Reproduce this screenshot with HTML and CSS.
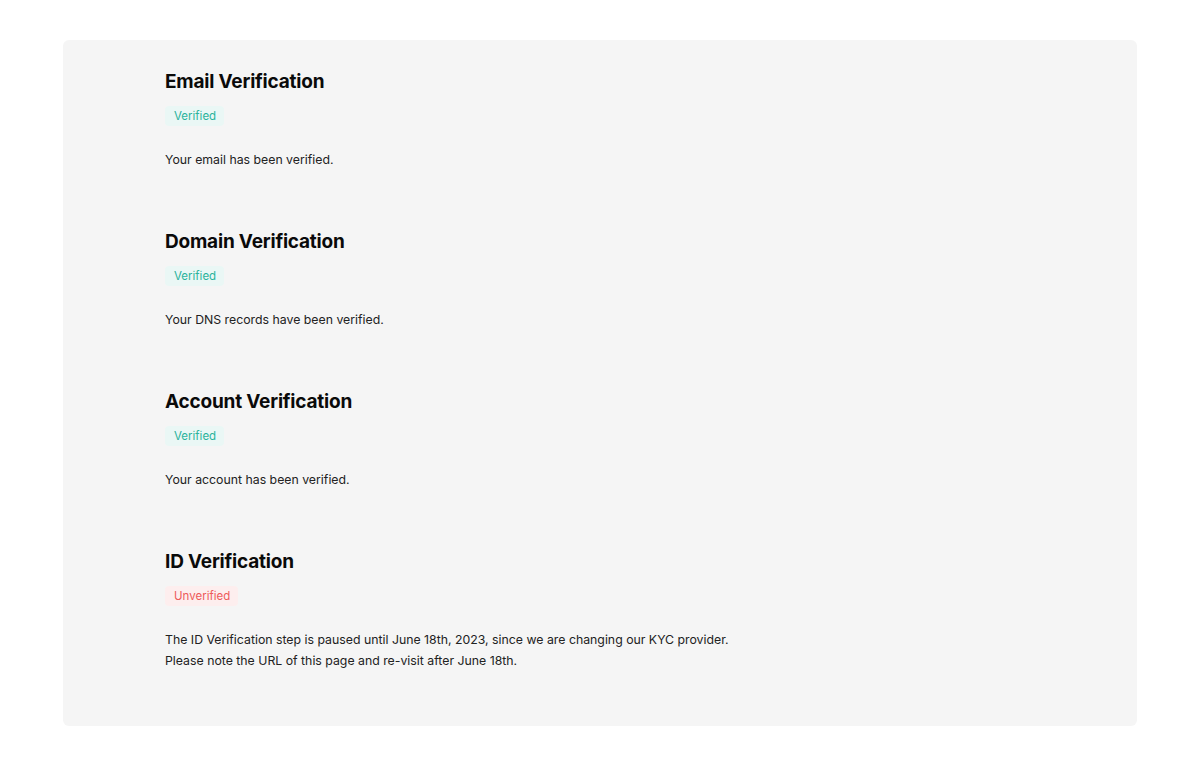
FILE: index.html
```html
<!DOCTYPE html>
<html lang="en">
<head>
<meta charset="utf-8">
<title>Verification</title>
<link rel="stylesheet" href="styles.css">
</head>
<body>
<main class="panel">
  <section class="step">
    <h2 class="step-title">Email Verification</h2>
    <span class="badge badge-ok">Verified</span>
    <p class="step-desc">Your email has been verified.</p>
  </section>
  <section class="step">
    <h2 class="step-title">Domain Verification</h2>
    <span class="badge badge-ok">Verified</span>
    <p class="step-desc">Your DNS records have been verified.</p>
  </section>
  <section class="step">
    <h2 class="step-title">Account Verification</h2>
    <span class="badge badge-ok">Verified</span>
    <p class="step-desc">Your account has been verified.</p>
  </section>
  <section class="step">
    <h2 class="step-title">ID Verification</h2>
    <span class="badge badge-bad">Unverified</span>
    <p class="step-desc">The ID Verification step is paused until June 18th, 2023, since we are changing our KYC provider.<br>Please note the URL of this page and re-visit after June 18th.</p>
  </section>
</main>
</body>
</html>
```
FILE: styles.css
```css
* { box-sizing: border-box; }
html, body { margin: 0; padding: 0; background: #ffffff; }
body {
  font-family: Inter, "Noto Sans", sans-serif;
  color: #1f1f1f;
  padding: 40px 63px 0 63px;
}
.panel {
  background: #f5f5f5;
  border-radius: 6px;
  padding: 28px 102px 55px 102px;
  display: flex;
  flex-direction: column;
  gap: 58px;
}
.step {
  display: flex;
  flex-direction: column;
  align-items: flex-start;
}
.step-title {
  margin: 0;
  font-size: 19px;
  line-height: 28px;
  font-weight: 700;
  color: #0a0a0a;
  letter-spacing: -0.2px;
}
.badge {
  margin-top: 10px;
  display: inline-block;
  font-size: 11.5px;
  line-height: 20px;
  height: 20px;
  padding: 0 8px 0 9px;
  border-radius: 4px;
}
.badge-ok { background: #eaf7f5; color: #2bb39c; }
.badge-bad { background: #fdeeee; color: #ee5a5a; }
.step-desc {
  margin: 23px 0 0 0;
  font-size: 12.3px;
  line-height: 21px;
  color: #222;
}
```
